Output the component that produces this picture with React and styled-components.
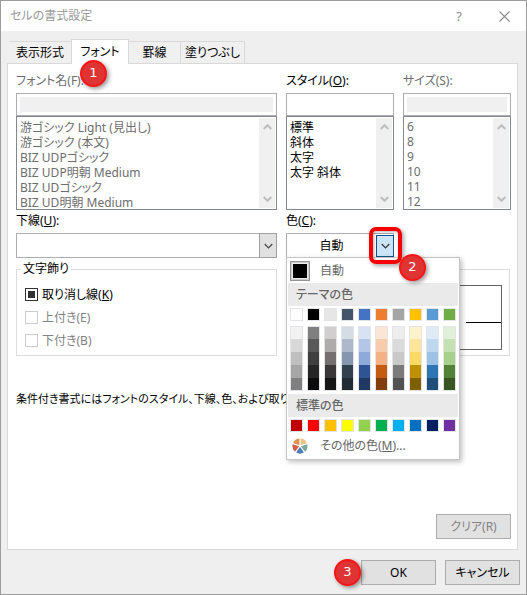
import React, { useEffect, useRef } from "react";
import styled, { createGlobalStyle, css } from "styled-components";

const GlobalStyle = createGlobalStyle`
  *, *::before, *::after { box-sizing: border-box; }
  body { margin: 0; background: #efefef; }
  body, button, input, select {
    font-family: "Noto Sans", "Noto Sans CJK JP", sans-serif;
    font-size: 12px;
    line-height: 16px;
    font-feature-settings: "palt";
  }
`;

const Dialog = styled.main`
  display: flex;
  flex-direction: column;
  min-height: 100vh;
  border: 1px solid #9c9c9c;
  background: #efefef;
  color: #000;
`;

const TitleBar = styled.header`
  display: flex;
  align-items: center;
  height: 30px;
  padding: 0 14px 0 9px;
  background: #fff;
  color: #999;
`;

const Title = styled.h1`
  flex: 1;
  margin: 0;
  font-size: 12px;
  font-weight: 400;
`;

const TitleButton = styled.button`
  display: grid;
  place-items: center;
  width: 16px;
  height: 20px;
  margin-left: 29px;
  padding: 0;
  border: 0;
  background: none;
  color: #8c8c8c;
  font-size: 13px;
`;

const Tabs = styled.div`
  display: flex;
  align-items: flex-end;
  height: 33px;
  margin-bottom: -1px;
  padding-left: 8px;
`;

const Tab = styled.button`
  flex: 0 0 auto;
  width: ${(p) => p.$width}px;
  height: 23px;
  padding: 0;
  border: 1px solid #d9d9d9;
  border-left: 0;
  background: #f0f0f0;
  color: #000;
  white-space: nowrap;
  ${(p) =>
    p.$active &&
    css`
      height: 25px;
      border-bottom: 0;
      border-left: 1px solid #d9d9d9;
      background: #fff;
    `}
`;

const TabSlot = styled.div`
  position: relative;
  display: flex;
  margin-left: -1px;
`;

const Panel = styled.section`
  flex: 1;
  display: flex;
  flex-direction: column;
  margin: 0 8px 0 6px;
  padding: 9px 6px 10px 8px;
  border: 1px solid #d9d9d9;
  background: #fff;
`;

const Columns = styled.div`
  display: grid;
  grid-template-columns: minmax(0, 261fr) minmax(0, 108fr) minmax(0, 108fr);
  column-gap: 9px;
  row-gap: 3px;
`;

const Field = styled.div`
  display: flex;
  flex-direction: column;
`;

const Label = styled.label`
  height: 16px;
  margin-bottom: 4px;
  white-space: nowrap;
  color: ${(p) => (p.$muted ? "#6d6d6d" : "#000")};
`;

const TextBox = styled.input`
  width: 100%;
  height: 23px;
  padding: 2px 3px;
  border: 1px solid #adadb3;
  background: #fff;
  &:disabled {
    background: #f0f0f0 content-box;
    box-shadow: inset 0 0 0 3px #fff;
  }
`;

const ListFrame = styled.div`
  display: flex;
  height: 94px;
  padding: 1px;
  border: 1px solid #828790;
  background: #fff;
`;

const List = styled.select`
  flex: 1;
  min-width: 0;
  height: 90px;
  padding: 0;
  border: 0;
  outline: 0;
  overflow: hidden;
  appearance: none;
  background: #fff;
  color: #000;
  opacity: 1;
  option {
    height: 15px;
    min-height: 15px;
    padding: 0 2px;
    line-height: 13px;
    color: ${(p) => (p.disabled ? "#6d6d6d" : "#000")};
  }
`;

const ScrollTrack = styled.div`
  display: flex;
  flex-direction: column;
  justify-content: space-between;
  align-items: center;
  width: 16px;
  padding: 6px 0;
  background: #f0f0f0;
  color: #bdbdbd;
`;

const Combo = styled.div`
  position: relative;
  display: flex;
  height: 25px;
  border: 1px solid #adadb3;
  background: #fff;
`;

const ComboSelect = styled.select`
  flex: 1;
  min-width: 0;
  padding: 0 4px;
  border: 0;
  appearance: none;
  background: #fff;
`;

const ComboArrow = styled.span`
  display: grid;
  place-items: center;
  width: 18px;
  margin: -1px -1px -1px 0;
  border: 1px solid #a0a0a0;
  background: #e1e1e1;
  color: #444;
  pointer-events: none;
`;

const ComboValue = styled.output`
  flex: 1;
  align-self: center;
  text-align: center;
`;

const OpenArrow = styled.button`
  display: grid;
  place-items: center;
  width: 18px;
  margin: 1px -1px 0 0;
  padding: 0;
  border: 1px solid #0f548c;
  background: #cce4f7;
  color: #333;
`;

const Group = styled.fieldset`
  min-width: 0;
  margin: 0;
  padding: 6px 8px 3px;
  border: 1px solid #dcdcdc;
`;

const Legend = styled.legend`
  height: 16px;
  margin-left: -4px;
  padding: 0 2px;
`;

const CheckRow = styled.label`
  display: flex;
  align-items: center;
  gap: 4px;
  height: 23px;
  color: ${(p) => (p.$muted ? "#838383" : "#000")};
`;

const CheckBox = styled.input`
  width: 13px;
  height: 13px;
  margin: 0;
  padding: 2px;
  border: 1px solid #333;
  appearance: none;
  background: #fff;
  &:indeterminate { background: #333 content-box; }
  &:disabled { border-color: #ccc; }
`;

const Preview = styled.div`
  display: flex;
  grid-column: span 2;
  margin: 8px 1px 0 0;
  padding: 15px 7px 5px;
  border: 1px solid #dcdcdc;
`;

const PreviewBox = styled.div`
  flex: 1;
  display: flex;
  align-items: center;
  justify-content: flex-end;
  border: 1px solid #646464;
`;

const PreviewLine = styled.div`
  width: 17%;
  height: 1px;
  margin-top: 10px;
  background: #000;
`;

const Note = styled.p`
  margin: 35px 0 20px;
  overflow: hidden;
  font-size: 11px;
  white-space: nowrap;
`;

const Button = styled.button`
  width: 75px;
  height: 25px;
  padding: 0;
  border: 1px solid #adadad;
  background: #e1e1e1;
  color: #000;
  &:disabled { color: #838383; }
`;

const PanelActions = styled.div`
  display: flex;
  justify-content: flex-end;
  margin-top: auto;
`;

const Footer = styled.footer`
  display: flex;
  justify-content: flex-end;
  gap: 9px;
  padding: 10px 6px 9px;
`;

const OkSlot = styled.div`
  position: relative;
`;

const Badge = styled.span`
  position: absolute;
  z-index: 4;
  left: ${(p) => p.$left}px;
  top: ${(p) => p.$top}px;
  width: 27px;
  height: 27px;
  border: 2px solid #fa1414;
  border-radius: 50%;
  background: #de3434;
  box-shadow: 2px 2px 4px rgba(0, 0, 0, 0.4);
  color: #fff;
  font-family: "DejaVu Sans", sans-serif;
  font-size: 13px;
  line-height: 22px;
  text-align: center;
`;

const Highlight = styled.span`
  position: absolute;
  z-index: 3;
  top: -7px;
  right: -9px;
  width: 33px;
  height: 37px;
  border: 4px solid #f90000;
  border-radius: 7px;
  box-shadow: 2px 2px 4px rgba(0, 0, 0, 0.35), inset 1px 1px 3px rgba(0, 0, 0, 0.3);
  pointer-events: none;
`;

const Palette = styled.div`
  position: absolute;
  z-index: 2;
  top: 23px;
  left: -1px;
  width: 174px;
  padding: 1px;
  border: 1px solid #c6c6c6;
  background: #fff;
  box-shadow: 2px 2px 5px rgba(0, 0, 0, 0.25);
  color: #666;
`;

const PaletteItem = styled.button`
  display: grid;
  grid-template-columns: 32px 1fr;
  align-items: center;
  width: 100%;
  height: 24px;
  padding: 0;
  border: 0;
  background: #fff;
  color: #666;
  text-align: left;
`;

const CurrentSwatch = styled.span`
  width: 20px;
  height: 20px;
  margin-left: 2px;
  border: 1px solid #969696;
  background: #000;
  box-shadow: inset 0 0 0 1px #ccc, inset 0 0 0 2px #ececec;
`;

const PaletteHeading = styled.h2`
  height: 23px;
  margin: 0;
  padding: 0 8px;
  background: #eaeaea;
  font-size: 12px;
  font-weight: 500;
  line-height: 23px;
`;

const SwatchRow = styled.div`
  display: grid;
  grid-template-columns: repeat(10, 13px);
  column-gap: 4px;
  padding: ${(p) => p.$pad};
`;

const Shades = styled.div`
  display: flex;
  flex-direction: column;
  border: 1px solid #e2e4e7;
`;

const Swatch = styled.button`
  height: 13px;
  padding: 0;
  border: 1px solid #e2e4e7;
  background: ${(p) => p.$color};
`;

const Shade = styled.button`
  height: 13px;
  padding: 0;
  border: 0;
  background: ${(p) => p.$color};
  &:first-child, &:last-child { height: 12px; }
`;

const Wheel = styled.svg`
  margin-left: 4px;
`;

const THEME = [
  ["#ffffff", "#f2f2f2", "#d9d9d9", "#bfbfbf", "#a6a6a6", "#7f7f7f"],
  ["#000000", "#7f7f7f", "#595959", "#3f3f3f", "#262626", "#0c0c0c"],
  ["#e7e6e6", "#d0cece", "#aeabab", "#757070", "#3a3838", "#171616"],
  ["#44546a", "#d6dce4", "#adb9ca", "#8496b0", "#323f4f", "#222a35"],
  ["#4472c4", "#d9e2f3", "#b4c6e7", "#8eaadb", "#2f5496", "#1f3864"],
  ["#ed7d31", "#fbe5d5", "#f7cbac", "#f4b183", "#c55a11", "#833c0b"],
  ["#a5a5a5", "#ededed", "#dbdbdb", "#c9c9c9", "#7b7b7b", "#525252"],
  ["#ffc000", "#fff2cc", "#fee599", "#ffd965", "#bf9000", "#7f6000"],
  ["#5b9bd5", "#deebf6", "#bdd7ee", "#9cc3e5", "#2e75b5", "#1e4e79"],
  ["#70ad47", "#e2efd9", "#c5e0b3", "#a8d08d", "#538135", "#375623"],
];

const STANDARD = [
  "#c00000", "#ff0000", "#ffc000", "#ffff00", "#92d050",
  "#00b050", "#00b0f0", "#0070c0", "#002060", "#7030a0",
];

const FONTS = [
  "游ゴシック Light (見出し)",
  "游ゴシック (本文)",
  "BIZ UDPゴシック",
  "BIZ UDP明朝 Medium",
  "BIZ UDゴシック",
  "BIZ UD明朝 Medium",
];
const STYLES = ["標準", "斜体", "太字", "太字 斜体"];
const SIZES = ["6", "8", "9", "10", "11", "12"];

const Chevron = ({ up, thick }) => (
  <svg width="9" height="6" viewBox="0 0 9 6" fill="none" stroke="currentColor" strokeWidth={thick ? 2 : 1.2} aria-hidden="true">
    <path d={up ? "M0.7 5 4.5 1.2 8.3 5" : "M0.7 1 4.5 4.8 8.3 1"} />
  </svg>
);

const ListField = ({ id, label, items, disabled }) => (
  <Field>
    <Label htmlFor={id} $muted={disabled}>{label}</Label>
    <TextBox id={id} disabled={disabled} />
    <ListFrame>
      <List size={6} disabled={disabled} aria-labelledby={id}>
        {items.map((item) => <option key={item}>{item}</option>)}
      </List>
      <ScrollTrack>
        <Chevron up thick />
        <Chevron thick />
      </ScrollTrack>
    </ListFrame>
  </Field>
);

const Check = ({ children, disabled, mixed }) => {
  const ref = useRef(null);
  useEffect(() => {
    ref.current.indeterminate = Boolean(mixed);
  }, [mixed]);
  return (
    <CheckRow $muted={disabled}>
      <CheckBox ref={ref} type="checkbox" disabled={disabled} />
      <span>{children}</span>
    </CheckRow>
  );
};

const ColorWheel = () => (
  <Wheel width="16" height="16" viewBox="0 0 16 16" aria-hidden="true">
    <path fill="#e2914c" d="M8 8 0.9 5.7A7.5 7.5 0 0 1 8 0.5Z" />
    <path fill="#ecc384" d="M8 8V0.5A7.5 7.5 0 0 1 15.1 5.7Z" />
    <path fill="#7fa896" d="M8 8 15.1 5.7A7.5 7.5 0 0 1 12.4 14.1Z" />
    <path fill="#4a7ebb" d="M8 8 12.4 14.1A7.5 7.5 0 0 1 3.6 14.1Z" />
    <path fill="#d2604a" d="M8 8 3.6 14.1A7.5 7.5 0 0 1 0.9 5.7Z" />
    <path stroke="#fff" strokeWidth="1.2" d="M8 8V0M8 8 16 5.4M8 8 12.8 14.7M8 8 3.2 14.7M8 8 0 5.4" />
  </Wheel>
);

const ColorPalette = () => (
  <Palette>
    <PaletteItem><CurrentSwatch /><span>自動</span></PaletteItem>
    <PaletteHeading>テーマの色</PaletteHeading>
    <SwatchRow $pad="2px 2px 5px">
      {THEME.map(([base]) => <Swatch key={base} $color={base} aria-label={base} />)}
    </SwatchRow>
    <SwatchRow $pad="0 2px 3px">
      {THEME.map(([base, ...shades]) => (
        <Shades key={base}>
          {shades.map((c) => <Shade key={c} $color={c} aria-label={c} />)}
        </Shades>
      ))}
    </SwatchRow>
    <PaletteHeading>標準の色</PaletteHeading>
    <SwatchRow $pad="2px 2px 2px">
      {STANDARD.map((c) => <Swatch key={c} $color={c} aria-label={c} />)}
    </SwatchRow>
    <PaletteItem><ColorWheel /><span>その他の色(<u>M</u>)...</span></PaletteItem>
  </Palette>
);

export default function App() {
  return (
    <>
      <GlobalStyle />
      <Dialog>
        <TitleBar>
          <Title>セルの書式設定</Title>
          <TitleButton aria-label="ヘルプ">?</TitleButton>
          <TitleButton aria-label="閉じる">
            <svg width="11" height="11" viewBox="0 0 11 11" stroke="currentColor" strokeWidth="1.1" aria-hidden="true">
              <path d="M0.5 0.5 10.5 10.5M10.5 0.5 0.5 10.5" />
            </svg>
          </TitleButton>
        </TitleBar>
        <Tabs>
          <Tab $width={63}>表示形式</Tab>
          <TabSlot>
            <Tab $width={58} $active>フォント</Tab>
            <Badge $left={9} $top={21}>1</Badge>
          </TabSlot>
          <Tab $width={52}>罫線</Tab>
          <Tab $width={64}>塗りつぶし</Tab>
        </Tabs>
        <Panel>
          <Columns>
            <ListField id="font" label="フォント名(F):" items={FONTS} disabled />
            <ListField id="style" label={<>スタイル(<u>O</u>):</>} items={STYLES} />
            <ListField id="size" label="サイズ(S):" items={SIZES} disabled />
            <Field>
              <Label htmlFor="underline">下線(<u>U</u>):</Label>
              <Combo>
                <ComboSelect id="underline"><option></option></ComboSelect>
                <ComboArrow><Chevron /></ComboArrow>
              </Combo>
            </Field>
            <Field>
              <Label htmlFor="color">色(<u>C</u>):</Label>
              <Combo>
                <ComboValue>自動</ComboValue>
                <OpenArrow id="color" aria-expanded="true"><Chevron /></OpenArrow>
                <ColorPalette />
                <Highlight />
                <Badge $left={112} $top={20}>2</Badge>
              </Combo>
            </Field>
            <div />
            <Group>
              <Legend>文字飾り</Legend>
              <Check mixed>取り消し線(<u>K</u>)</Check>
              <Check disabled>上付き(E)</Check>
              <Check disabled>下付き(B)</Check>
            </Group>
            <Preview>
              <PreviewBox><PreviewLine /></PreviewBox>
            </Preview>
          </Columns>
          <Note>条件付き書式にはフォントのスタイル、下線、色、および取り</Note>
          <PanelActions><Button disabled>クリア(R)</Button></PanelActions>
        </Panel>
        <Footer>
          <OkSlot>
            <Button>OK</Button>
            <Badge $left={-27} $top={-1}>3</Badge>
          </OkSlot>
          <Button>キャンセル</Button>
        </Footer>
      </Dialog>
    </>
  );
}
